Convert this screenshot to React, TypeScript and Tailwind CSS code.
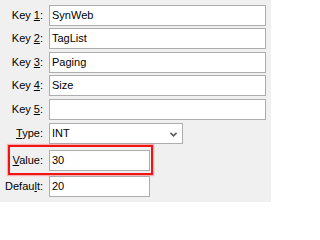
const font = { fontFamily: '"Liberation Sans", Arial, sans-serif' };

const Label = ({ pre, key_, post, className = 'w-[43px]' }: { pre: string; key_: string; post: string; className?: string }) => (
  <span className={`${className} shrink-0 whitespace-nowrap text-right`}>
    {pre}
    <span className="underline underline-offset-[1px]">{key_}</span>
    {post}
  </span>
);

const Field = ({ value, width }: { value: string; width: string }) => (
  <div className={`ml-[6px] flex h-[21px] ${width} items-center border border-[#adadad] bg-white pl-[2px]`}>
    {value}
  </div>
);

const rows = [
  { n: '1', value: 'SynWeb', mt: 'mt-0' },
  { n: '2', value: 'TagList', mt: 'mt-[2px]' },
  { n: '3', value: 'Paging', mt: 'mt-[3px]' },
  { n: '4', value: 'Size', mt: 'mt-[2px]' },
  { n: '5', value: '', mt: 'mt-[3px]' },
];

export default function App() {
  return (
    <div className="flex h-[202px] w-[271px] flex-col bg-[#f0f0f0] pt-[5px] text-[11px] leading-none text-black" style={font}>
      {rows.map((r) => (
        <div key={r.n} className={`flex items-center ${r.mt}`}>
          <Label pre="Key " key_={r.n} post=":" />
          <Field value={r.value} width="w-[217px]" />
        </div>
      ))}

      <div className="mt-[3px] flex items-center">
        <Label pre="" key_="T" post="ype:" />
        <div className="ml-[6px] flex h-[21px] w-[134px] items-center justify-between border border-[#adadad] bg-white pl-[2px] pr-[5px]">
          <span>INT</span>
          <svg width="7" height="5" viewBox="0 0 7 5" className="mt-[1px]">
            <path d="M0.5 0.8 L3.5 3.8 L6.5 0.8" fill="none" stroke="#5a5a5a" strokeWidth="1.6" />
          </svg>
        </div>
      </div>

      <div className="ml-[8px] mt-[1px] flex h-[30px] w-[145px] items-center border-2 border-[#f01414] shadow-[0_0_1px_1px_rgba(255,60,60,0.35)]">
        <Label pre="" key_="V" post="alue:" className="w-[33px]" />
        <Field value="30" width="w-[101px]" />
      </div>

      <div className="mt-[1px] flex items-center">
        <Label pre="Defau" key_="l" post="t:" />
        <Field value="20" width="w-[101px]" />
      </div>
    </div>
  );
}
